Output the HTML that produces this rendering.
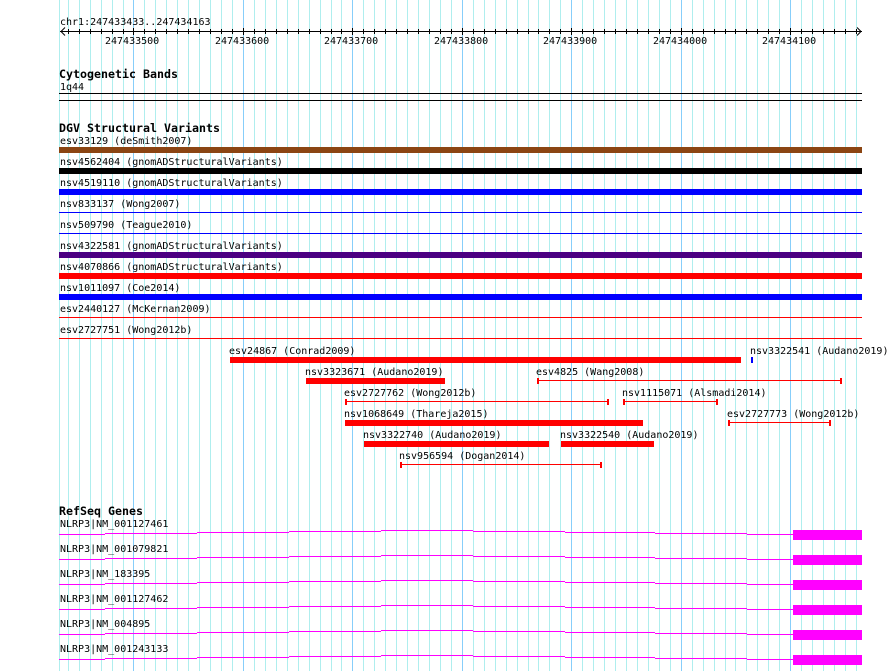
<!DOCTYPE html>
<html lang="en">
<head>
<meta charset="utf-8">
<title>Genome browser tracks</title>
<style>
html,body{margin:0;padding:0;background:#fff;width:890px;height:671px;overflow:hidden}
svg{display:block}
text{font-family:"DejaVu Sans Mono","Liberation Mono",monospace;font-size:10px;fill:#000}
text.b{font-weight:bold;font-size:11.63px}
</style>
</head>
<body>
<svg xmlns="http://www.w3.org/2000/svg" width="890" height="671" viewBox="0 0 890 671" shape-rendering="crispEdges">
<!-- minor grid -->
<path fill="none" stroke="#afeeee" stroke-width="1" transform="translate(.5 0)" d="M59 0V671M68 0V671M79 0V671M90 0V671M101 0V671M112 0V671M123 0V671M144 0V671M155 0V671M166 0V671M177 0V671M188 0V671M199 0V671M210 0V671M221 0V671M232 0V671M254 0V671M265 0V671M276 0V671M287 0V671M298 0V671M309 0V671M320 0V671M331 0V671M341 0V671M363 0V671M374 0V671M385 0V671M396 0V671M407 0V671M418 0V671M429 0V671M440 0V671M451 0V671M473 0V671M484 0V671M495 0V671M506 0V671M517 0V671M528 0V671M538 0V671M549 0V671M560 0V671M582 0V671M593 0V671M604 0V671M615 0V671M626 0V671M637 0V671M648 0V671M659 0V671M670 0V671M692 0V671M703 0V671M714 0V671M725 0V671M735 0V671M746 0V671M757 0V671M768 0V671M779 0V671M801 0V671M812 0V671M823 0V671M834 0V671M845 0V671M856 0V671"/>
<!-- major grid -->
<path fill="none" stroke="#87cefa" stroke-width="1" transform="translate(.5 0)" d="M133 0V671M243 0V671M352 0V671M462 0V671M571 0V671M681 0V671M790 0V671"/>

<!-- ruler -->
<rect x="60" y="31" width="802" height="1" fill="#000"/>
<path fill="none" stroke="#000" stroke-width="1" transform="translate(.5 0)" d="M68 29V34M79 29V34M90 29V34M101 29V34M112 29V34M123 29V34M133 28V35M144 29V34M155 29V34M166 29V34M177 29V34M188 29V34M199 29V34M210 29V34M221 29V34M232 29V34M243 28V35M254 29V34M265 29V34M276 29V34M287 29V34M298 29V34M309 29V34M320 29V34M331 29V34M341 29V34M352 28V35M363 29V34M374 29V34M385 29V34M396 29V34M407 29V34M418 29V34M429 29V34M440 29V34M451 29V34M462 28V35M473 29V34M484 29V34M495 29V34M506 29V34M517 29V34M528 29V34M538 29V34M549 29V34M560 29V34M571 28V35M582 29V34M593 29V34M604 29V34M615 29V34M626 29V34M637 29V34M648 29V34M659 29V34M670 29V34M681 28V35M692 29V34M703 29V34M714 29V34M725 29V34M735 29V34M746 29V34M757 29V34M768 29V34M779 29V34M790 28V35M801 29V34M812 29V34M823 29V34M834 29V34M845 29V34M856 29V34"/>
<path fill="none" stroke="#000" stroke-width="1" shape-rendering="auto" d="M65 27.5L61 31.5L65 35.5M857 27.5L861 31.5L857 35.5"/>
<text x="60" y="25">chr1:247433433..247434163</text>
<text x="105" y="44">247433500</text>
<text x="215" y="44">247433600</text>
<text x="324" y="44">247433700</text>
<text x="434" y="44">247433800</text>
<text x="543" y="44">247433900</text>
<text x="653" y="44">247434000</text>
<text x="762" y="44">247434100</text>

<!-- cytogenetic -->
<text class="b" x="59" y="78">Cytogenetic Bands</text>
<text x="60" y="90">1q44</text>
<rect x="59" y="93" width="803" height="1" fill="#000"/>
<rect x="59" y="100" width="803" height="1" fill="#000"/>

<!-- DGV -->
<text class="b" x="59" y="132">DGV Structural Variants</text>
<text x="60" y="144">esv33129 (deSmith2007)</text>
<rect x="59" y="147" width="803" height="6" fill="#8b4513"/>
<text x="60" y="165">nsv4562404 (gnomADStructuralVariants)</text>
<rect x="59" y="168" width="803" height="6" fill="#000"/>
<text x="60" y="186">nsv4519110 (gnomADStructuralVariants)</text>
<rect x="59" y="189" width="803" height="6" fill="#0000ff"/>
<text x="60" y="207">nsv833137 (Wong2007)</text>
<rect x="59" y="212" width="803" height="1" fill="#0000ff"/>
<text x="60" y="228">nsv509790 (Teague2010)</text>
<rect x="59" y="233" width="803" height="1" fill="#0000ff"/>
<text x="60" y="249">nsv4322581 (gnomADStructuralVariants)</text>
<rect x="59" y="252" width="803" height="6" fill="#4b0082"/>
<text x="60" y="270">nsv4070866 (gnomADStructuralVariants)</text>
<rect x="59" y="273" width="803" height="6" fill="#ff0000"/>
<text x="60" y="291">nsv1011097 (Coe2014)</text>
<rect x="59" y="294" width="803" height="6" fill="#0000ff"/>
<text x="60" y="312">esv2440127 (McKernan2009)</text>
<rect x="59" y="317" width="803" height="1" fill="#ff0000"/>
<text x="60" y="333">esv2727751 (Wong2012b)</text>
<rect x="59" y="338" width="803" height="1" fill="#ff0000"/>

<text x="229" y="354">esv24867 (Conrad2009)</text>
<rect x="230" y="357" width="511" height="6" fill="#ff0000"/>
<text x="750" y="354">nsv3322541 (Audano2019)</text>
<rect x="751" y="357" width="2" height="6" fill="#0000ff"/>

<text x="305" y="375">nsv3323671 (Audano2019)</text>
<rect x="306" y="378" width="139" height="6" fill="#ff0000"/>
<text x="536" y="375">esv4825 (Wang2008)</text>
<g fill="#ff0000">
<rect x="537" y="380" width="305" height="1"/><rect x="537" y="378" width="2" height="6"/><rect x="840" y="378" width="2" height="6"/>
</g>

<text x="344" y="396">esv2727762 (Wong2012b)</text>
<g fill="#ff0000">
<rect x="345" y="401" width="264" height="1"/><rect x="345" y="399" width="2" height="6"/><rect x="607" y="399" width="2" height="6"/>
</g>
<text x="622" y="396">nsv1115071 (Alsmadi2014)</text>
<g fill="#ff0000">
<rect x="623" y="401" width="95" height="1"/><rect x="623" y="399" width="2" height="6"/><rect x="716" y="399" width="2" height="6"/>
</g>

<text x="344" y="417">nsv1068649 (Thareja2015)</text>
<rect x="345" y="420" width="298" height="6" fill="#ff0000"/>
<text x="727" y="417">esv2727773 (Wong2012b)</text>
<g fill="#ff0000">
<rect x="728" y="422" width="103" height="1"/><rect x="728" y="420" width="2" height="6"/><rect x="829" y="420" width="2" height="6"/>
</g>

<text x="363" y="438">nsv3322740 (Audano2019)</text>
<rect x="364" y="441" width="185" height="6" fill="#ff0000"/>
<text x="560" y="438">nsv3322540 (Audano2019)</text>
<rect x="561" y="441" width="93" height="6" fill="#ff0000"/>

<text x="399" y="459">nsv956594 (Dogan2014)</text>
<g fill="#ff0000">
<rect x="400" y="464" width="202" height="1"/><rect x="400" y="462" width="2" height="6"/><rect x="600" y="462" width="2" height="6"/>
</g>

<!-- RefSeq -->
<text class="b" x="59" y="515">RefSeq Genes</text>

<text x="60" y="527">NLRP3|NM_001127461</text>
<g fill="#ff00ff">
<rect x="59" y="534" width="46" height="1"/><rect x="105" y="533" width="92" height="1"/><rect x="197" y="532" width="92" height="1"/><rect x="289" y="531" width="92" height="1"/><rect x="381" y="530" width="92" height="1"/><rect x="473" y="531" width="92" height="1"/><rect x="565" y="532" width="90" height="1"/><rect x="655" y="533" width="92" height="1"/><rect x="747" y="534" width="46" height="1"/><rect x="793" y="530" width="69" height="10"/>
</g>

<text x="60" y="552">NLRP3|NM_001079821</text>
<g fill="#ff00ff">
<rect x="59" y="559" width="46" height="1"/><rect x="105" y="558" width="92" height="1"/><rect x="197" y="557" width="92" height="1"/><rect x="289" y="556" width="92" height="1"/><rect x="381" y="555" width="92" height="1"/><rect x="473" y="556" width="92" height="1"/><rect x="565" y="557" width="90" height="1"/><rect x="655" y="558" width="92" height="1"/><rect x="747" y="559" width="46" height="1"/><rect x="793" y="555" width="69" height="10"/>
</g>

<text x="60" y="577">NLRP3|NM_183395</text>
<g fill="#ff00ff">
<rect x="59" y="584" width="46" height="1"/><rect x="105" y="583" width="92" height="1"/><rect x="197" y="582" width="92" height="1"/><rect x="289" y="581" width="92" height="1"/><rect x="381" y="580" width="92" height="1"/><rect x="473" y="581" width="92" height="1"/><rect x="565" y="582" width="90" height="1"/><rect x="655" y="583" width="92" height="1"/><rect x="747" y="584" width="46" height="1"/><rect x="793" y="580" width="69" height="10"/>
</g>

<text x="60" y="602">NLRP3|NM_001127462</text>
<g fill="#ff00ff">
<rect x="59" y="609" width="46" height="1"/><rect x="105" y="608" width="92" height="1"/><rect x="197" y="607" width="92" height="1"/><rect x="289" y="606" width="92" height="1"/><rect x="381" y="605" width="92" height="1"/><rect x="473" y="606" width="92" height="1"/><rect x="565" y="607" width="90" height="1"/><rect x="655" y="608" width="92" height="1"/><rect x="747" y="609" width="46" height="1"/><rect x="793" y="605" width="69" height="10"/>
</g>

<text x="60" y="627">NLRP3|NM_004895</text>
<g fill="#ff00ff">
<rect x="59" y="634" width="46" height="1"/><rect x="105" y="633" width="92" height="1"/><rect x="197" y="632" width="92" height="1"/><rect x="289" y="631" width="92" height="1"/><rect x="381" y="630" width="92" height="1"/><rect x="473" y="631" width="92" height="1"/><rect x="565" y="632" width="90" height="1"/><rect x="655" y="633" width="92" height="1"/><rect x="747" y="634" width="46" height="1"/><rect x="793" y="630" width="69" height="10"/>
</g>

<text x="60" y="652">NLRP3|NM_001243133</text>
<g fill="#ff00ff">
<rect x="59" y="659" width="46" height="1"/><rect x="105" y="658" width="92" height="1"/><rect x="197" y="657" width="92" height="1"/><rect x="289" y="656" width="92" height="1"/><rect x="381" y="655" width="92" height="1"/><rect x="473" y="656" width="92" height="1"/><rect x="565" y="657" width="90" height="1"/><rect x="655" y="658" width="92" height="1"/><rect x="747" y="659" width="46" height="1"/><rect x="793" y="655" width="69" height="10"/>
</g>
</svg>
</body>
</html>
